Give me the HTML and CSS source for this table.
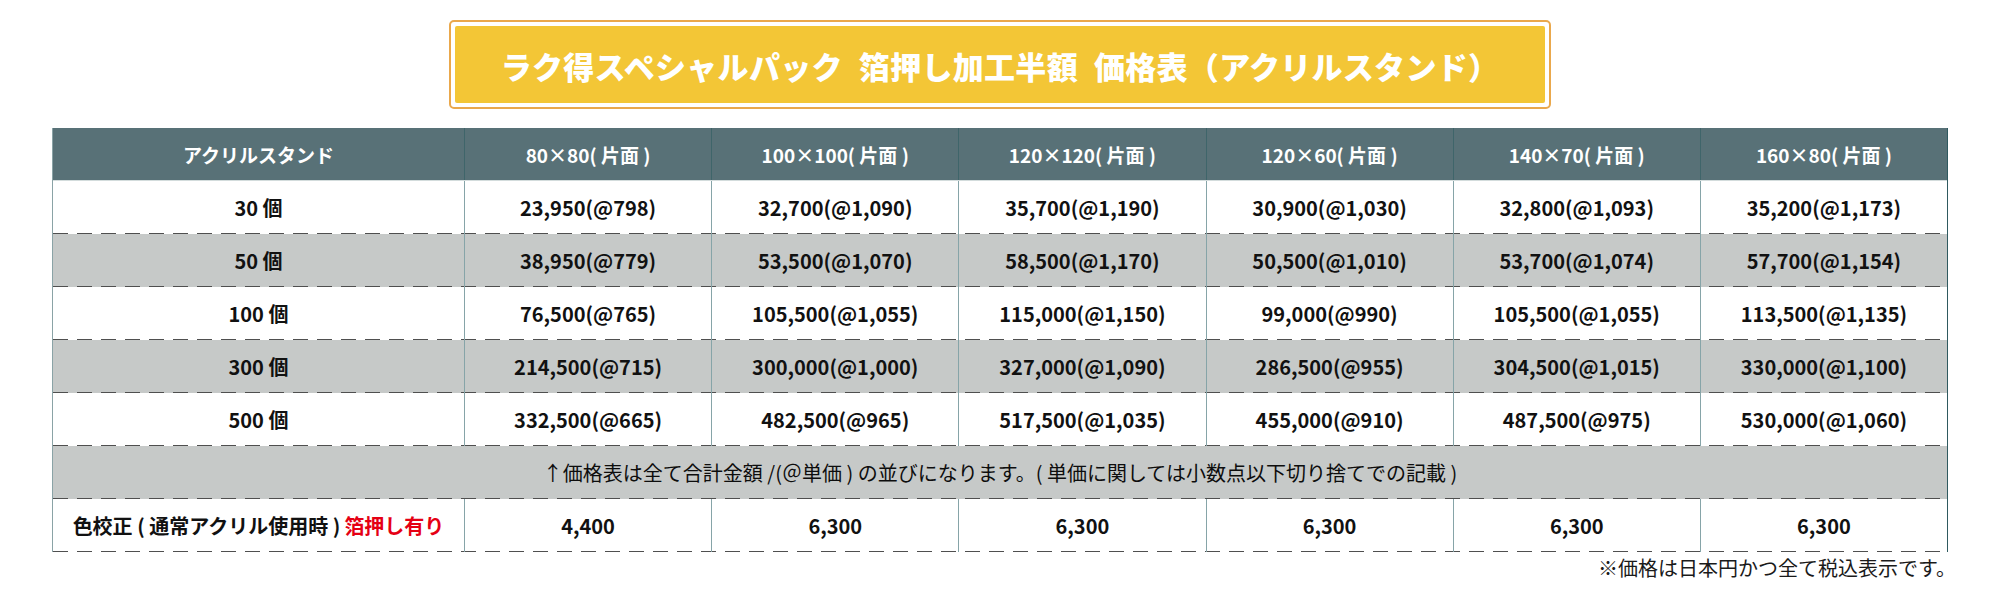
FILE: index.html
```html
<!DOCTYPE html>
<html lang="ja">
<head>
<meta charset="utf-8">
<title>価格表</title>
<link rel="stylesheet" href="styles.css">
</head>
<body>
<div class="page">
  <div class="title-wrap">
    <div class="title-box">
      <div class="title-inner">ラク得スペシャルパック<span class="gap"></span>箔押し加工半額<span class="gap"></span>価格表（アクリルスタンド）</div>
    </div>
  </div>

  <div class="table">
    <div class="row head">
      <div class="cell">アクリルスタンド</div>
      <div class="cell">80×80( 片面 )</div>
      <div class="cell">100×100( 片面 )</div>
      <div class="cell">120×120( 片面 )</div>
      <div class="cell">120×60( 片面 )</div>
      <div class="cell">140×70( 片面 )</div>
      <div class="cell">160×80( 片面 )</div>
    </div>
    <div class="row">
      <div class="cell">30 個</div>
      <div class="cell">23,950(@798)</div>
      <div class="cell">32,700(@1,090)</div>
      <div class="cell">35,700(@1,190)</div>
      <div class="cell">30,900(@1,030)</div>
      <div class="cell">32,800(@1,093)</div>
      <div class="cell">35,200(@1,173)</div>
    </div>
    <div class="row alt">
      <div class="cell">50 個</div>
      <div class="cell">38,950(@779)</div>
      <div class="cell">53,500(@1,070)</div>
      <div class="cell">58,500(@1,170)</div>
      <div class="cell">50,500(@1,010)</div>
      <div class="cell">53,700(@1,074)</div>
      <div class="cell">57,700(@1,154)</div>
    </div>
    <div class="row">
      <div class="cell">100 個</div>
      <div class="cell">76,500(@765)</div>
      <div class="cell">105,500(@1,055)</div>
      <div class="cell">115,000(@1,150)</div>
      <div class="cell">99,000(@990)</div>
      <div class="cell">105,500(@1,055)</div>
      <div class="cell">113,500(@1,135)</div>
    </div>
    <div class="row alt">
      <div class="cell">300 個</div>
      <div class="cell">214,500(@715)</div>
      <div class="cell">300,000(@1,000)</div>
      <div class="cell">327,000(@1,090)</div>
      <div class="cell">286,500(@955)</div>
      <div class="cell">304,500(@1,015)</div>
      <div class="cell">330,000(@1,100)</div>
    </div>
    <div class="row">
      <div class="cell">500 個</div>
      <div class="cell">332,500(@665)</div>
      <div class="cell">482,500(@965)</div>
      <div class="cell">517,500(@1,035)</div>
      <div class="cell">455,000(@910)</div>
      <div class="cell">487,500(@975)</div>
      <div class="cell">530,000(@1,060)</div>
    </div>
    <div class="row note">
      <div class="cell wide">↑価格表は全て合計金額 /(＠単価 ) の並びになります。( 単価に関しては小数点以下切り捨てでの記載 )</div>
    </div>
    <div class="row">
      <div class="cell">色校正 ( 通常アクリル使用時 ) <span class="red">箔押し有り</span></div>
      <div class="cell">4,400</div>
      <div class="cell">6,300</div>
      <div class="cell">6,300</div>
      <div class="cell">6,300</div>
      <div class="cell">6,300</div>
      <div class="cell">6,300</div>
    </div>
  </div>

  <div class="footnote">※価格は日本円かつ全て税込表示です。</div>
</div>
</body>
</html>
```

FILE: styles.css
```css
* { box-sizing: border-box; }

html, body {
  margin: 0;
  padding: 0;
  background: #ffffff;
}

body {
  font-family: "Noto Sans CJK JP", "Noto Sans", sans-serif;
  color: #111111;
}

.page {
  width: 2000px;
  padding: 20px 52px 0 52px;
}

.title-wrap {
  display: flex;
  justify-content: center;
}

.title-box {
  width: 1102px;
  height: 89px;
  border: 2px solid #eaa84c;
  border-radius: 5px;
  padding: 4px;
  background: #ffffff;
}

.title-inner {
  height: 100%;
  background: #f3c636;
  border-radius: 2px;
  display: flex;
  align-items: center;
  justify-content: center;
  color: #ffffff;
  font-weight: 900;
  font-size: 31px;
  letter-spacing: 0.3px;
  padding-top: 2px;
  white-space: nowrap;
}

.title-inner .gap {
  display: inline-block;
  width: 16px;
}

.table {
  margin-top: 19px;
  border-left: 1px solid #8aa3a6;
  border-right: 1.5px solid #2f5a60;
}

.row {
  display: grid;
  grid-template-columns: 411px repeat(6, 1fr);
  height: 53px;
  background-color: #ffffff;
  background-image: repeating-linear-gradient(to right, #4f4f4f 0 15px, transparent 15px 24px);
  background-size: 100% 1.5px;
  background-position: 0 100%;
  background-repeat: no-repeat;
}

.row.alt,
.row.note {
  background-color: #c6c9c8;
}

.row.head {
  background: #587177;
  border-bottom: 1px solid #d3dcdc;
}

.cell {
  display: flex;
  align-items: center;
  justify-content: center;
  font-size: 20px;
  font-weight: 700;
  white-space: nowrap;
  color: #111111;
}

.cell + .cell {
  border-left: 1.5px solid #86a4a8;
}

.row.head .cell {
  color: #ffffff;
  font-size: 19px;
  padding-top: 1px;
}

.row.head .cell + .cell {
  border-left: 1.5px solid #3f656a;
}

.row.note .cell.wide {
  grid-column: 1 / -1;
  font-weight: 400;
  font-size: 20px;
  color: #0d0d0d;
}

.red {
  color: #e50014;
  margin-left: 4px;
}

.footnote {
  text-align: right;
  font-size: 20px;
  line-height: 26px;
  margin-top: 3px;
  margin-right: -8px;
  color: #1a1a1a;
}
```
